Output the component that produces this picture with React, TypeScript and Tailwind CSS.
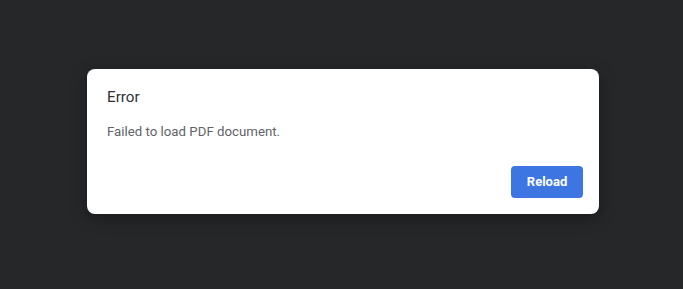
export default function App() {
  return (
    <div className="flex h-[289px] w-full items-center justify-center bg-[#262729] pb-[6px] pl-[3px] font-['Roboto',sans-serif]">
      <div className="flex h-[145px] w-[512px] flex-col rounded-[8px] bg-white shadow-[0_4px_16px_rgba(0,0,0,0.35)]">
        <div className="px-[20px] pt-[18px] text-[15.2px] leading-[20px] text-[#303134]">Error</div>
        <div className="px-[20px] pt-[15px] text-[13.25px] leading-[20px] text-[#5f6368]">
          Failed to load PDF document.
        </div>
        <div className="mt-auto flex justify-end px-[16px] pb-[16px]">
          <button className="h-[32px] w-[72px] rounded-[4px] bg-[#3d76e3] text-[13px] font-bold text-white">
            Reload
          </button>
        </div>
      </div>
    </div>
  );
}
